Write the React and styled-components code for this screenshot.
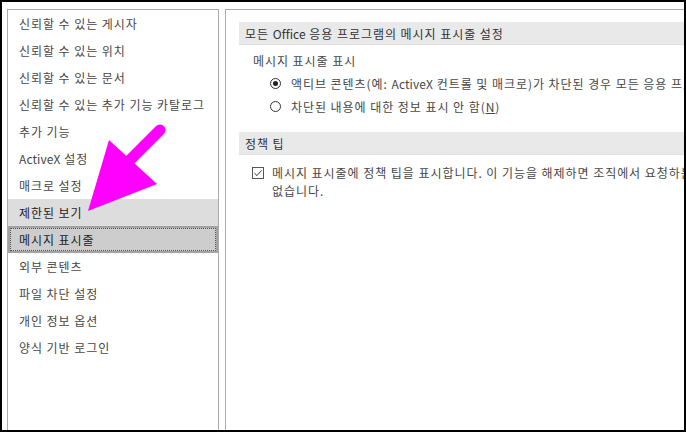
import React from "react";
import styled, { createGlobalStyle } from "styled-components";

const Global = createGlobalStyle`
  html, body { margin: 0; padding: 0; background: #fff; }
  body { font-family: "Noto Sans CJK KR", "Noto Sans", sans-serif; }
`;

const Frame = styled.div`
  position: relative;
  width: 686px;
  height: 432px;
  box-sizing: border-box;
  border: 2px solid #000;
  padding: 7px 0 0 5px;
  display: flex;
  gap: 6px;
  overflow: hidden;
  background: #fff;
  font-family: "Noto Sans CJK KR", "Noto Sans", sans-serif;
  font-size: 12px;
  letter-spacing: 0.95px;
  color: #474747;
`;

const Latin = styled.span`
  letter-spacing: 0.1px;
`;

const Sidebar = styled.div`
  width: 212px;
  flex: none;
  box-sizing: border-box;
  border: 1px solid #ababab;
  border-bottom: none;
  display: flex;
  flex-direction: column;
`;

const NavItem = styled.div`
  position: relative;
  height: 27px;
  box-sizing: border-box;
  padding-left: 11px;
  display: flex;
  align-items: center;
  white-space: pre;
  background: ${(p) => (p.$selected ? "#cdcdcd" : p.$hover ? "#dedddd" : "transparent")};
  color: ${(p) => (p.$selected || p.$hover ? "#222" : "#474747")};
  ${(p) =>
    p.$selected &&
    `
    box-shadow: inset 0 0 0 2px #a3a3a3;
    &::after {
      content: "";
      position: absolute;
      inset: 2px;
      border: 1px dotted #555;
    }
  `}
`;

const Main = styled.div`
  flex: 1;
  min-width: 0;
  box-sizing: border-box;
  border: 1px solid #ababab;
  border-right: none;
  border-bottom: none;
  padding: 12px 0 0 13px;
  overflow: hidden;
  white-space: nowrap;
`;

const SectionHeader = styled.div`
  height: 23px;
  box-sizing: border-box;
  background: #e9e9e9;
  border-bottom: 1px solid #dedede;
  padding-left: 6px;
  display: flex;
  align-items: center;
  white-space: pre;
  color: #333;
  width: 700px;
`;

const SectionBody = styled.div`
  padding: ${(p) => p.$pad || "4px 0 14px 0"};
`;

const Row = styled.div`
  height: 23px;
  display: flex;
  align-items: center;
  white-space: pre;
  padding-left: ${(p) => p.$indent || 0}px;
`;

const RadioCircle = styled.span`
  width: 11px;
  height: 11px;
  box-sizing: border-box;
  border: 1px solid #333;
  border-radius: 50%;
  margin-right: 10px;
  display: inline-flex;
  align-items: center;
  justify-content: center;
  flex: none;
  &::after {
    content: "";
    width: 5px;
    height: 5px;
    border-radius: 50%;
    background: ${(p) => (p.$checked ? "#222" : "transparent")};
  }
`;

const CheckRow = styled.div`
  display: flex;
  align-items: flex-start;
  padding-left: 13px;
  line-height: 18px;
`;

const CheckBox = styled.span`
  width: 12px;
  height: 12px;
  box-sizing: border-box;
  border: 1px solid #555;
  margin-top: 3px;
  margin-right: 8px;
  flex: none;
  display: flex;
  align-items: center;
  justify-content: center;
`;

const Underline = styled.span`
  text-decoration: underline;
`;

const Arrow = styled.svg`
  position: absolute;
  left: 0;
  top: 0;
  pointer-events: none;
`;

const items = [
  "신뢰할 수 있는 게시자",
  "신뢰할 수 있는 위치",
  "신뢰할 수 있는 문서",
  "신뢰할 수 있는 추가 기능 카탈로그",
  "추가 기능",
  <><Latin>ActiveX</Latin> 설정</>,
  "매크로 설정",
  "제한된 보기",
  "메시지 표시줄",
  "외부 콘텐츠",
  "파일 차단 설정",
  "개인 정보 옵션",
  "양식 기반 로그인",
];

export default function App() {
  return (
    <>
      <Global />
      <Frame>
        <Sidebar>
          {items.map((t, i) => (
            <NavItem key={i} $hover={i === 7} $selected={i === 8}>
              {t}
            </NavItem>
          ))}
        </Sidebar>
        <Main>
          <SectionHeader>
            모든 <Latin>Office</Latin> 응용 프로그램의 메시지 표시줄 설정
          </SectionHeader>
          <SectionBody>
            <Row $indent={14}>메시지 표시줄 표시</Row>
            <Row $indent={31}>
              <RadioCircle $checked />
              액티브 콘텐츠(예: <Latin>ActiveX</Latin> 컨트롤 및 매크로)가 차단된 경우 모든 응용 프로그램에 메시지 표시줄 표시(S)
            </Row>
            <Row $indent={31}>
              <RadioCircle />
              차단된 내용에 대한 정보 표시 안 함(<Underline>N</Underline>)
            </Row>
          </SectionBody>
          <SectionHeader>정책 팁</SectionHeader>
          <SectionBody $pad="9px 0 0 0">
            <CheckRow>
              <CheckBox>
                <svg width="10" height="10" viewBox="0 0 10 10">
                  <path d="M1.5 5.2 L4 7.6 L8.6 2.4" fill="none" stroke="#333" strokeWidth="1" />
                </svg>
              </CheckBox>
              <span>
                메시지 표시줄에 정책 팁을 표시합니다. 이 기능을 해제하면 조직에서 요청하는 경우에도 정책 팁을 표시할 수
                <br />
                없습니다.
              </span>
            </CheckRow>
          </SectionBody>
        </Main>
        <Arrow width="686" height="432" viewBox="0 0 686 432">
          <line x1="158" y1="128" x2="128" y2="158" stroke="#ff00ff" strokeWidth="11" strokeLinecap="round" />
          <polygon points="107,138 155,182 86,209" fill="#ff00ff" />
        </Arrow>
      </Frame>
    </>
  );
}
